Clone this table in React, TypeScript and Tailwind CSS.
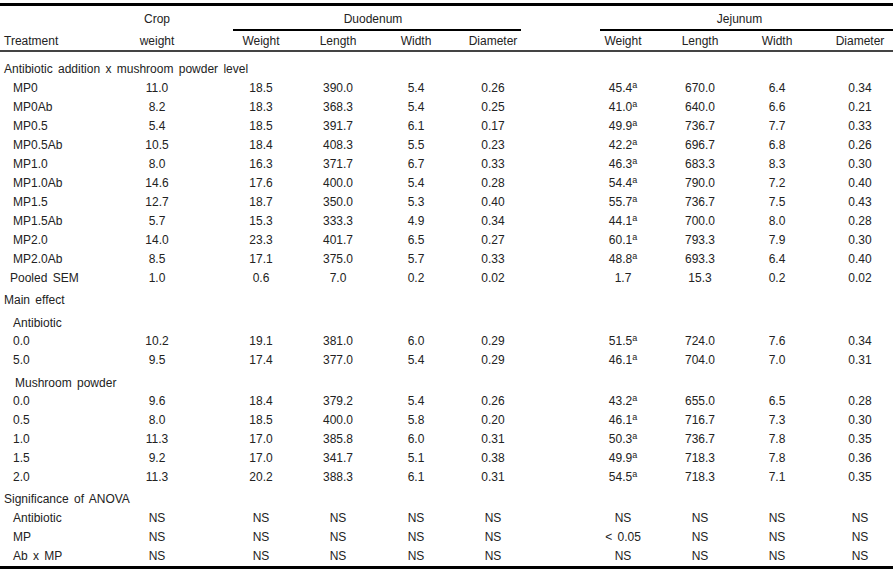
import React from "react";

const GRID =
  "grid grid-cols-[118px_78px_27px_76px_78px_78px_76px_54px_76px_78px_76px_12px_66px]";

type RowData = { label: string; indent: string; values: string[] };

const treatments: RowData[] = [
  { label: "MP0", indent: "pl-[13px]", values: ["11.0", "18.5", "390.0", "5.4", "0.26", "45.4^a", "670.0", "6.4", "0.34"] },
  { label: "MP0Ab", indent: "pl-[13px]", values: ["8.2", "18.3", "368.3", "5.4", "0.25", "41.0^a", "640.0", "6.6", "0.21"] },
  { label: "MP0.5", indent: "pl-[13px]", values: ["5.4", "18.5", "391.7", "6.1", "0.17", "49.9^a", "736.7", "7.7", "0.33"] },
  { label: "MP0.5Ab", indent: "pl-[13px]", values: ["10.5", "18.4", "408.3", "5.5", "0.23", "42.2^a", "696.7", "6.8", "0.26"] },
  { label: "MP1.0", indent: "pl-[13px]", values: ["8.0", "16.3", "371.7", "6.7", "0.33", "46.3^a", "683.3", "8.3", "0.30"] },
  { label: "MP1.0Ab", indent: "pl-[13px]", values: ["14.6", "17.6", "400.0", "5.4", "0.28", "54.4^a", "790.0", "7.2", "0.40"] },
  { label: "MP1.5", indent: "pl-[13px]", values: ["12.7", "18.7", "350.0", "5.3", "0.40", "55.7^a", "736.7", "7.5", "0.43"] },
  { label: "MP1.5Ab", indent: "pl-[13px]", values: ["5.7", "15.3", "333.3", "4.9", "0.34", "44.1^a", "700.0", "8.0", "0.28"] },
  { label: "MP2.0", indent: "pl-[13px]", values: ["14.0", "23.3", "401.7", "6.5", "0.27", "60.1^a", "793.3", "7.9", "0.30"] },
  { label: "MP2.0Ab", indent: "pl-[13px]", values: ["8.5", "17.1", "375.0", "5.7", "0.33", "48.8^a", "693.3", "6.4", "0.40"] },
  { label: "Pooled SEM", indent: "pl-[10px]", values: ["1.0", "0.6", "7.0", "0.2", "0.02", "1.7", "15.3", "0.2", "0.02"] },
];

const antibiotic: RowData[] = [
  { label: "0.0", indent: "pl-[13px]", values: ["10.2", "19.1", "381.0", "6.0", "0.29", "51.5^a", "724.0", "7.6", "0.34"] },
  { label: "5.0", indent: "pl-[13px]", values: ["9.5", "17.4", "377.0", "5.4", "0.29", "46.1^a", "704.0", "7.0", "0.31"] },
];

const mushroom: RowData[] = [
  { label: "0.0", indent: "pl-[13px]", values: ["9.6", "18.4", "379.2", "5.4", "0.26", "43.2^a", "655.0", "6.5", "0.28"] },
  { label: "0.5", indent: "pl-[13px]", values: ["8.0", "18.5", "400.0", "5.8", "0.20", "46.1^a", "716.7", "7.3", "0.30"] },
  { label: "1.0", indent: "pl-[13px]", values: ["11.3", "17.0", "385.8", "6.0", "0.31", "50.3^a", "736.7", "7.8", "0.35"] },
  { label: "1.5", indent: "pl-[13px]", values: ["9.2", "17.0", "341.7", "5.1", "0.38", "49.9^a", "718.3", "7.8", "0.36"] },
  { label: "2.0", indent: "pl-[13px]", values: ["11.3", "20.2", "388.3", "6.1", "0.31", "54.5^a", "718.3", "7.1", "0.35"] },
];

const ns = ["NS", "NS", "NS", "NS", "NS", "NS", "NS", "NS", "NS"];
const anova: RowData[] = [
  { label: "Antibiotic", indent: "pl-[13px]", values: ns },
  { label: "MP", indent: "pl-[13px]", values: ["NS", "NS", "NS", "NS", "NS", "< 0.05", "NS", "NS", "NS"] },
  { label: "Ab x MP", indent: "pl-[13px]", values: ns },
];

function Value({ text }: { text: string }) {
  const [num, sup] = text.split("^");
  return (
    <div className="text-center whitespace-pre">
      {num}
      {sup && <sup className="text-[9px] -top-[4px]">{sup}</sup>}
    </div>
  );
}

function Row({ row }: { row: RowData }) {
  const v = row.values;
  return (
    <div className={`${GRID} h-[19px] items-center`}>
      <div className={`${row.indent} whitespace-nowrap`}>{row.label}</div>
      <Value text={v[0]} />
      <div />
      <Value text={v[1]} />
      <Value text={v[2]} />
      <Value text={v[3]} />
      <Value text={v[4]} />
      <div />
      <Value text={v[5]} />
      <Value text={v[6]} />
      <Value text={v[7]} />
      <div />
      <Value text={v[8]} />
    </div>
  );
}

function Heading({ text, className }: { text: string; className: string }) {
  return <div className={`flex items-center whitespace-nowrap ${className}`}>{text}</div>;
}

export default function App() {
  return (
    <div className="w-[895px] h-[571px] bg-white text-[#222] font-['Liberation_Sans',Arial,sans-serif] text-[12px] leading-[14px] [word-spacing:2px]">
      <div className="w-[893px] pt-[3px]">
        {/* Header */}
        <div className="border-t-[3px] border-black">
          <div className={GRID}>
            <div />
            <div className="text-center pt-[6px] pb-[5px]">Crop</div>
            <div />
            <div className="col-span-4 px-[10px]">
              <div className="text-center pt-[6px] pb-[3px] pr-[8px] border-b-2 border-black">Duodenum</div>
            </div>
            <div />
            <div className="col-span-5 pl-[15px]">
              <div className="text-center pt-[6px] pb-[3px] pr-[14px] border-b-2 border-black">Jejunum</div>
            </div>
          </div>
          <div className={`${GRID} pt-[3px] pb-[2px] border-b-2 border-[#444]`}>
            <div className="pl-[4px]">Treatment</div>
            <div className="text-center">weight</div>
            <div />
            <div className="text-center">Weight</div>
            <div className="text-center">Length</div>
            <div className="text-center">Width</div>
            <div className="text-center">Diameter</div>
            <div />
            <div className="text-center">Weight</div>
            <div className="text-center">Length</div>
            <div className="text-center">Width</div>
            <div />
            <div className="text-center">Diameter</div>
          </div>
        </div>

        {/* Body */}
        <Heading text="Antibiotic addition x mushroom powder level" className="h-[19px] mt-[7px] pl-[4px]" />
        {treatments.map((r) => (
          <Row key={r.label} row={r} />
        ))}

        <Heading text="Main effect" className="h-[19px] mt-[3px] pl-[4px]" />
        <Heading text="Antibiotic" className="h-[17px] mt-[5px] pl-[13px]" />
        {antibiotic.map((r) => (
          <Row key={r.label} row={r} />
        ))}
        <Heading text="Mushroom powder" className="h-[17px] mt-[5px] pl-[15px]" />
        {mushroom.map((r) => (
          <Row key={r.label} row={r} />
        ))}

        <Heading text="Significance of ANOVA" className="h-[19px] mt-[3px] pl-[4px]" />
        {anova.map((r) => (
          <Row key={r.label} row={r} />
        ))}
        <div className="mt-[1px] border-t-[3px] border-black" />
      </div>
    </div>
  );
}
